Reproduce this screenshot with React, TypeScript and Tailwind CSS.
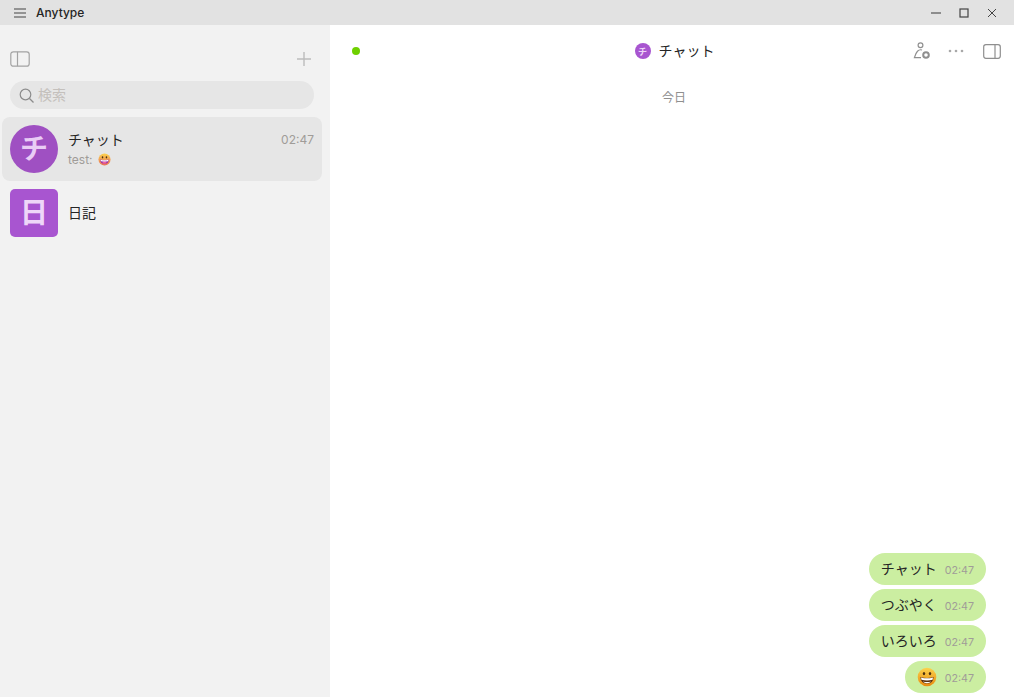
import React from 'react';

const FONT = { fontFamily: 'Inter, "Noto Sans CJK JP", sans-serif' };

const GrinEmoji = ({ size, tongue }: { size: number; tongue?: boolean }) => (
  <svg width={size} height={size} viewBox="0 0 20 20">
    <defs>
      <linearGradient id={tongue ? 'g1' : 'g2'} x1="0" y1="0" x2="0" y2="1">
        <stop offset="0" stopColor="#fcd34d" />
        <stop offset="1" stopColor={tongue ? '#e8705a' : '#e88a10'} />
      </linearGradient>
    </defs>
    <circle cx="10" cy="10" r="9.3" fill={`url(#${tongue ? 'g1' : 'g2'})`} />
    <ellipse cx="7" cy="6.6" rx="1.2" ry="1.7" fill="#4a3010" />
    <ellipse cx="13" cy="6.6" rx="1.2" ry="1.7" fill="#4a3010" />
    <path d="M3.4 10 Q10 12 16.6 10 Q16.2 16.6 10 16.6 Q3.8 16.6 3.4 10Z" fill={tongue ? '#8b1fa8' : '#5a3010'} />
    <path d="M4 10.4 Q10 12.2 16 10.4 L15.6 12.8 Q10 14 4.4 12.8Z" fill="#fff" />
    {tongue && <ellipse cx="10" cy="15" rx="3.4" ry="1.4" fill="#f0609a" />}
    {!tongue && <path d="M5.8 14.4 Q10 15.4 14.2 14.4 Q12.8 16.2 10 16.2 Q7.2 16.2 5.8 14.4Z" fill="#fff" />}
  </svg>
);

const Bubble = ({ children }: { children: React.ReactNode }) => (
  <div className="flex h-8 items-center rounded-2xl bg-[#cbeea1] pl-3 pr-3">
    {children}
    <span className="ml-2 mt-[3px] text-[10.7px] leading-4 text-[#a09c98]">02:47</span>
  </div>
);

export default function App() {
  return (
    <div className="flex h-[697px] w-[1014px] flex-col overflow-hidden bg-white" style={FONT}>
      {/* title bar */}
      <div className="flex h-[25px] shrink-0 items-center bg-[#e2e2e2] pl-[14px] pr-[17px] text-[#252525]">
        <svg width="12" height="10" viewBox="0 0 12 10" fill="none" stroke="#444" strokeWidth="1.1">
          <path d="M0 1h12M0 5h12M0 9h12" />
        </svg>
        <span className="ml-[10px] text-xs font-medium leading-4">Anytype</span>
        <div className="ml-auto flex items-center gap-[18px]">
          <svg width="10" height="10" viewBox="0 0 10 10" fill="none" stroke="#555" strokeWidth="1.2">
            <path d="M0 5h10" />
          </svg>
          <svg width="10" height="10" viewBox="0 0 10 10" fill="none" stroke="#444" strokeWidth="1.2">
            <rect x="1" y="1" width="8" height="8" />
          </svg>
          <svg width="10" height="10" viewBox="0 0 10 10" fill="none" stroke="#444" strokeWidth="1">
            <path d="M1 1l8 8M9 1l-8 8" />
          </svg>
        </div>
      </div>

      <div className="flex min-h-0 flex-1">
        {/* sidebar */}
        <aside className="flex w-[330px] shrink-0 flex-col bg-[#f2f2f2]">
          <div className="flex h-[48px] shrink-0 items-end justify-between pb-[6px] pl-[10px] pr-[18px]">
            <svg width="20" height="16" viewBox="0 0 20 16" fill="none" stroke="#a3a3a3" strokeWidth="1.2">
              <rect x="0.8" y="0.8" width="18.4" height="14.4" rx="2.5" />
              <path d="M7.5 0.8v14.4" />
            </svg>
            <svg width="16" height="16" viewBox="0 0 16 16" fill="none" stroke="#bdbdbd" strokeWidth="1.4">
              <path d="M8 1v14M1 8h14" />
            </svg>
          </div>
          <div className="ml-[10px] mt-2 flex h-7 w-[304px] shrink-0 items-center rounded-2xl bg-[#e6e6e6] pl-[9px]">
            <svg width="15" height="15" viewBox="0 0 15 15" fill="none" stroke="#8c8c8c" strokeWidth="1.2">
              <circle cx="6.5" cy="6.5" r="5.3" />
              <path d="M10.5 10.5l4 4" />
            </svg>
            <span className="ml-1 text-sm leading-5 text-[#c4c0bc]">検索</span>
          </div>

          <div className="mx-[2px] mt-2 flex h-16 w-[320px] items-center rounded-lg bg-[#e6e6e6] pl-2 pr-2">
            <div className="flex h-12 w-12 shrink-0 items-center justify-center rounded-full bg-[#9f50c2] text-[28px] font-bold leading-none text-[#e9cdf5]">
              チ
            </div>
            <div className="ml-[10px] flex min-w-0 flex-1 flex-col">
              <div className="flex items-center justify-between pt-[1px]">
                <span className="text-sm leading-5 text-[#252525]">チャット</span>
                <span className="text-xs leading-5 text-[#a09c98]">02:47</span>
              </div>
              <div className="flex items-center gap-[5px] text-xs leading-5 text-[#a09c98]">
                <span>test:</span>
                <GrinEmoji size={13} tongue />
              </div>
            </div>
          </div>

          <div className="mt-2 flex items-center pl-[10px]">
            <div className="flex h-12 w-12 shrink-0 items-center justify-center rounded-[5px] bg-[#a855d0] text-[28px] font-bold leading-none text-[#eed6f8]">
              日
            </div>
            <span className="ml-[10px] text-sm leading-5 text-[#252525]">日記</span>
          </div>
        </aside>

        {/* chat */}
        <main className="flex min-w-0 flex-1 flex-col">
          <div className="grid h-[52px] shrink-0 grid-cols-[1fr_auto_1fr] items-center pl-[22px] pr-[13px]">
            <div className="h-2 w-2 rounded-full bg-[#6fd000]" />
            <div className="mr-1 flex items-center">
              <div className="flex h-4 w-4 items-center justify-center rounded-full bg-[#a855d0] text-[9px] font-bold leading-none text-[#eed6f8]">
                チ
              </div>
              <span className="ml-2 text-sm leading-5 text-[#252525]">チャット</span>
            </div>
            <div className="flex items-center justify-end">
              <svg width="18" height="18" viewBox="0 0 18 18" fill="none" stroke="#8f8f8f" strokeWidth="1.2">
                <circle cx="7.5" cy="3.2" r="2.4" />
                <path d="M9 8C5.5 6.8 3 10 1.4 15.6h6.6" />
                <circle cx="13" cy="13" r="2.8" strokeWidth="2" />
              </svg>
              <svg className="ml-[17px]" width="16" height="4" viewBox="0 0 16 4" fill="#a8a8a8">
                <circle cx="2" cy="2" r="1.3" />
                <circle cx="8" cy="2" r="1.3" />
                <circle cx="14" cy="2" r="1.3" />
              </svg>
              <svg className="ml-[19px]" width="18" height="15" viewBox="0 0 18 15" fill="none" stroke="#8f8f8f" strokeWidth="1.2">
                <rect x="0.7" y="0.7" width="16.6" height="13.6" rx="2.2" />
                <path d="M12 0.7v13.6" />
              </svg>
            </div>
          </div>

          <div className="mt-[13px] pl-1 text-center text-xs leading-4 text-[#8f8f8f]">今日</div>

          <div className="mt-auto flex flex-col items-end gap-1 pb-1 pr-[28px]">
            <Bubble><span className="text-sm leading-5 text-[#252525]">チャット</span></Bubble>
            <Bubble><span className="text-sm leading-5 text-[#252525]">つぶやく</span></Bubble>
            <Bubble><span className="text-sm leading-5 text-[#252525]">いろいろ</span></Bubble>
            <Bubble><GrinEmoji size={20} /></Bubble>
          </div>
        </main>
      </div>
    </div>
  );
}
